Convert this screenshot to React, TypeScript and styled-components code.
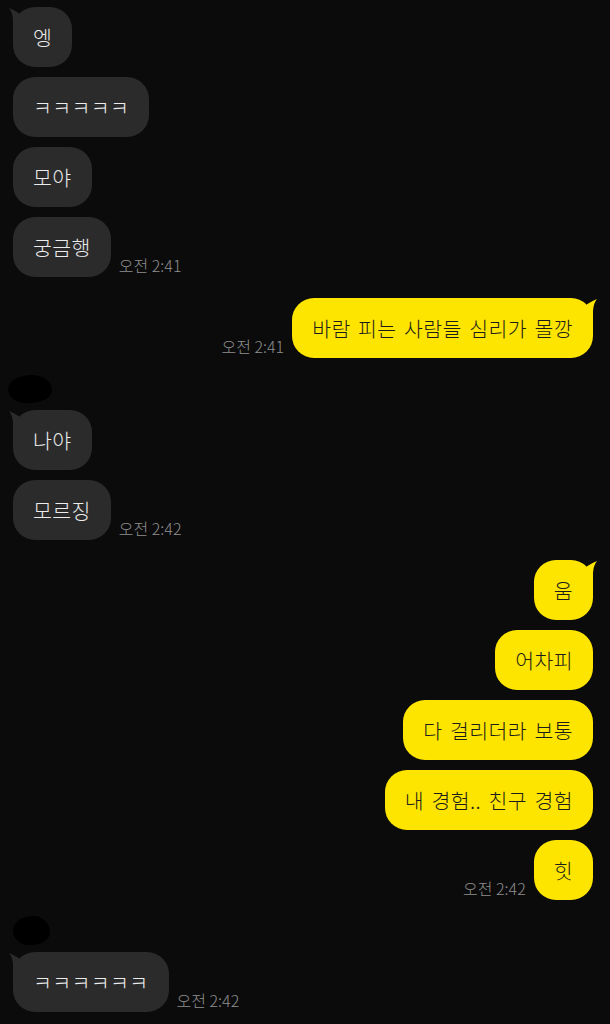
import styled, { createGlobalStyle } from 'styled-components'

type Side = 'in' | 'out'

type Group = {
  side: Side
  gapTop: number
  blob?: { w: number; h: number; x: number }
  messages: string[]
  time: string
}

const groups: Group[] = [
  { side: 'in', gapTop: 0, messages: ['엥', 'ㅋㅋㅋㅋㅋ', '모야', '궁금행'], time: '오전 2:41' },
  { side: 'out', gapTop: 21, messages: ['바람 피는 사람들 심리가 몰깡'], time: '오전 2:41' },
  { side: 'in', gapTop: 17, blob: { w: 44, h: 28, x: -5 }, messages: ['나야', '모르징'], time: '오전 2:42' },
  {
    side: 'out',
    gapTop: 20,
    messages: ['움', '어차피', '다 걸리더라 보통', '내 경험.. 친구 경험', '힛'],
    time: '오전 2:42',
  },
  { side: 'in', gapTop: 16, blob: { w: 37, h: 29, x: 0 }, messages: ['ㅋㅋㅋㅋㅋㅋ'], time: '오전 2:42' },
]

const GlobalStyle = createGlobalStyle`
  html, body {
    margin: 0;
    padding: 0;
    background: #0b0b0b;
  }
  body {
    font-family: 'Noto Sans CJK KR', 'Noto Sans', sans-serif;
  }
`

const Tail = ({ side }: { side: Side }) => (
  <StyledTail side={side} width='12' height='24' viewBox='0 0 12 24'>
    <path d='M1 1 Q6 3 11 6.2 L11 24 L5 24 L5 13 Q4.5 5 1 1 Z' />
  </StyledTail>
)

const App = () => {
  return (
    <>
      <GlobalStyle />
      <StyledChat>
        {groups.map((group, gi) => (
          <StyledGroup key={gi} gapTop={group.gapTop} side={group.side}>
            {group.blob && <StyledBlob w={group.blob.w} h={group.blob.h} x={group.blob.x} />}
            {group.messages.map((msg, mi) => {
              const last = mi === group.messages.length - 1
              return (
                <StyledRow key={mi} side={group.side}>
                  <StyledBubble side={group.side}>
                    {mi === 0 && <Tail side={group.side} />}
                    {msg}
                  </StyledBubble>
                  {last && <StyledTime>{group.time}</StyledTime>}
                </StyledRow>
              )
            })}
          </StyledGroup>
        ))}
      </StyledChat>
    </>
  )
}

export default App

const StyledChat = styled.div`
  min-height: 100vh;
  box-sizing: border-box;
  padding: 7px 17px 0 13px;
  display: flex;
  flex-direction: column;
  background: #0b0b0b;
`

const StyledGroup = styled.div<{ gapTop: number; side: Side }>`
  margin-top: ${p => p.gapTop}px;
  display: flex;
  flex-direction: column;
  align-items: ${p => (p.side === 'in' ? 'flex-start' : 'flex-end')};
  gap: 10px;
`

const StyledBlob = styled.div<{ w: number; h: number; x: number }>`
  width: ${p => p.w}px;
  height: ${p => p.h}px;
  margin-left: ${p => p.x}px;
  margin-bottom: -3px;
  background: #000;
  border-radius: 55% 45% 50% 42% / 50% 55% 45% 50%;
`

const StyledRow = styled.div<{ side: Side }>`
  display: flex;
  flex-direction: ${p => (p.side === 'in' ? 'row' : 'row-reverse')};
  align-items: flex-end;
  gap: 8px;
`

const StyledBubble = styled.div<{ side: Side }>`
  position: relative;
  box-sizing: border-box;
  height: 60px;
  padding: 0 20px;
  display: flex;
  align-items: center;
  border-radius: 22px;
  font-size: 20.5px;
  font-weight: 300;
  line-height: 26px;
  letter-spacing: 0.4px;
  word-spacing: 2.5px;
  white-space: nowrap;
  background: ${p => (p.side === 'in' ? '#2b2b2b' : '#fee500')};
  color: ${p => (p.side === 'in' ? '#ececec' : '#1c1c1c')};
`

const StyledTail = styled.svg<{ side: Side }>`
  position: absolute;
  top: 0;
  ${p => (p.side === 'in' ? 'left: -5px;' : 'right: -5px; transform: scaleX(-1);')}
  path {
    fill: ${p => (p.side === 'in' ? '#2b2b2b' : '#fee500')};
  }
`

const StyledTime = styled.span`
  font-size: 16px;
  font-weight: 300;
  line-height: 18px;
  margin-bottom: 3px;
  color: #8e8e8e;
  white-space: nowrap;
`
